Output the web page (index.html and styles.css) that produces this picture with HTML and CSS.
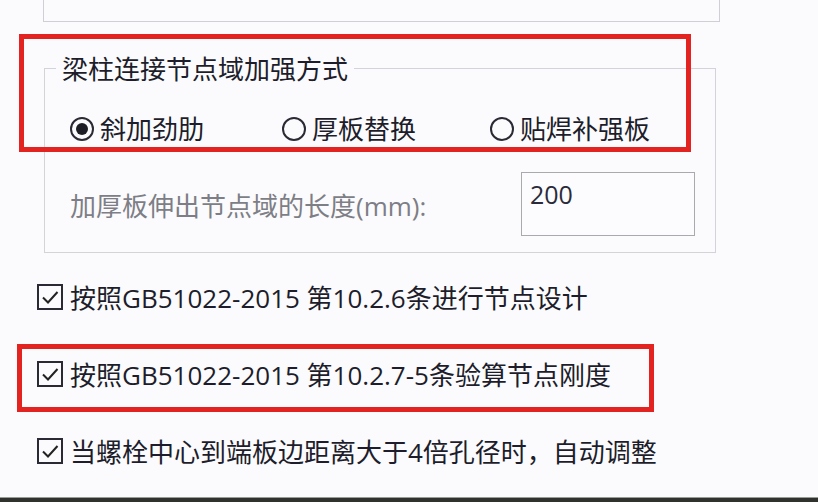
FILE: index.html
```html
<!DOCTYPE html>
<html lang="zh-CN">
<head>
    <meta charset="UTF-8">
    <meta name="viewport" content="width=device-width, initial-scale=1.0">
    <title>节点设计参数</title>
    <link rel="stylesheet" href="styles.css">
</head>
<body>
<div class="page">
    <div class="top-box"></div>

    <fieldset class="group">
        <legend>梁柱连接节点域加强方式</legend>
        <div class="radio-row">
            <label class="radio"><span class="dot checked"></span>斜加劲肋</label>
            <label class="radio"><span class="dot"></span>厚板替换</label>
            <label class="radio"><span class="dot"></span>贴焊补强板</label>
        </div>
        <div class="field-row">
            <span class="field-label">加厚板伸出节点域的长度(mm):</span>
            <div class="field-input">200</div>
        </div>
    </fieldset>

    <div class="checks">
        <label class="check">
            <span class="box"><svg viewBox="0 0 26 26" width="26" height="26"><path d="M6 13.5 L11 18.5 L20.5 8" fill="none" stroke="#222" stroke-width="2"/></svg></span>
            按照GB51022-2015 第10.2.6条进行节点设计
        </label>
        <label class="check">
            <span class="box"><svg viewBox="0 0 26 26" width="26" height="26"><path d="M6 13.5 L11 18.5 L20.5 8" fill="none" stroke="#222" stroke-width="2"/></svg></span>
            按照GB51022-2015 第10.2.7-5条验算节点刚度
        </label>
        <label class="check">
            <span class="box"><svg viewBox="0 0 26 26" width="26" height="26"><path d="M6 13.5 L11 18.5 L20.5 8" fill="none" stroke="#222" stroke-width="2"/></svg></span>
            当螺栓中心到端板边距离大于4倍孔径时，自动调整
        </label>
    </div>

    <div class="bottom-bar"></div>

    <!-- red annotation frames -->
    <div class="mark mark-group"></div>
    <div class="mark mark-check"></div>
</div>
</body>
</html>
```

FILE: styles.css
```css
body {
    margin: 0;
    background-color: #fbfbfd;
    font-family: "Open Sans", "Noto Sans CJK SC", sans-serif;
    font-size: 26px;
    color: #1d1d2b;
}
.page {
    position: relative;
    width: 818px;
    height: 502px;
    overflow: hidden;
    display: flex;
    flex-direction: column;
}
.top-box {
    margin-left: 43px;
    width: 675px;
    height: 21px;
    border: 1px solid #cfd0d6;
    border-top: none;
}
.group {
    margin: 31px 0 0 44px;
    padding: 0 0 16px 25px;
    width: 645px;
    border: 1px solid #d3d4da;
    box-sizing: content-box;
}
.group legend {
    margin-left: -14px;
    padding: 2px 6px 0 6px;
    line-height: 28px;
    font-size: 26px;
}
.radio-row {
    display: grid;
    grid-template-columns: 212px 208px auto;
    margin-top: 31px;
    height: 30px;
    align-items: center;
}
.radio {
    display: flex;
    align-items: center;
    gap: 6px;
    line-height: 30px;
}
.dot {
    width: 20px;
    height: 20px;
    border: 2px solid #2a2a35;
    border-radius: 50%;
    display: flex;
    align-items: center;
    justify-content: center;
}
.dot.checked::after {
    content: "";
    width: 12px;
    height: 12px;
    border-radius: 50%;
    background-color: #1d1d25;
}
.field-row {
    display: flex;
    align-items: center;
    margin-top: 28px;
}
.field-label {
    width: 451px;
    color: #7d7e86;
    padding-top: 2px;
}
.field-input {
    width: 164px;
    height: 59px;
    border: 1px solid #a9aab0;
    background-color: #fcfcfe;
    padding: 3px 0 0 8px;
    box-sizing: content-box;
    line-height: 36px;
    color: #2a2a3a;
    font-size: 25px;
}
.checks {
    display: flex;
    flex-direction: column;
    gap: 47px;
    margin: 29px 0 0 37px;
}
.check {
    display: flex;
    align-items: center;
    gap: 7px;
    height: 30px;
}
.box {
    width: 22px;
    height: 22px;
    border: 2px solid #2a2a35;
    display: flex;
    align-items: center;
    justify-content: center;
}
.box svg {
    flex: none;
}
.bottom-bar {
    margin-top: auto;
    height: 4px;
    border-top: 1px solid #9a9c98;
    background-color: #30322e;
}
.mark {
    position: absolute;
    border: 5px solid #e2231f;
    box-sizing: border-box;
}
.mark-group {
    left: 19px;
    top: 34px;
    width: 672px;
    height: 118px;
}
.mark-check {
    left: 17px;
    top: 344px;
    width: 637px;
    height: 68px;
}
```
